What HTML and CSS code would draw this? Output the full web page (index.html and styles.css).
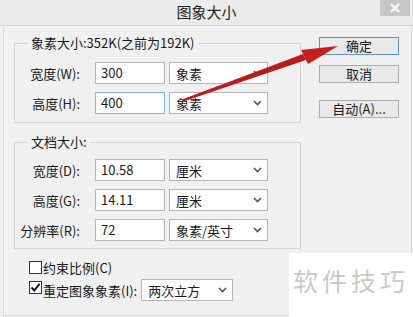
FILE: index.html
```html
<!DOCTYPE html>
<html>
<head>
    <title>图象大小</title>
    <link rel="stylesheet" href="styles.css">
</head>
<body>
<div class="window">
    <div class="titlebar">
        <span class="title">图象大小</span>
        <span class="close">
            <svg width="10" height="10" viewBox="0 0 10 10"><path d="M1 1L9 9M9 1L1 9" stroke="#fff" stroke-width="2"/></svg>
        </span>
    </div>

    <div class="frame">
        <div class="left">
            <fieldset class="group group-pixel">
                <legend>象素大小:352K(之前为192K)</legend>
                <div class="row">
                    <label>宽度(W):</label>
                    <div class="field">300</div>
                    <div class="select">象素<svg class="chev" width="9" height="6" viewBox="0 0 9 6"><path d="M1 1L4.5 4.5L8 1" fill="none" stroke="#555" stroke-width="1.6"/></svg></div>
                </div>
                <div class="row">
                    <label>高度(H):</label>
                    <div class="field focused">400</div>
                    <div class="select">象素<svg class="chev" width="9" height="6" viewBox="0 0 9 6"><path d="M1 1L4.5 4.5L8 1" fill="none" stroke="#555" stroke-width="1.6"/></svg></div>
                </div>
            </fieldset>

            <fieldset class="group group-doc">
                <legend>文档大小:</legend>
                <div class="row">
                    <label>宽度(D):</label>
                    <div class="field">10.58</div>
                    <div class="select">厘米<svg class="chev" width="9" height="6" viewBox="0 0 9 6"><path d="M1 1L4.5 4.5L8 1" fill="none" stroke="#555" stroke-width="1.6"/></svg></div>
                </div>
                <div class="row">
                    <label>高度(G):</label>
                    <div class="field">14.11</div>
                    <div class="select">厘米<svg class="chev" width="9" height="6" viewBox="0 0 9 6"><path d="M1 1L4.5 4.5L8 1" fill="none" stroke="#555" stroke-width="1.6"/></svg></div>
                </div>
                <div class="row">
                    <label>分辨率(R):</label>
                    <div class="field">72</div>
                    <div class="select">象素/英寸<svg class="chev" width="9" height="6" viewBox="0 0 9 6"><path d="M1 1L4.5 4.5L8 1" fill="none" stroke="#555" stroke-width="1.6"/></svg></div>
                </div>
            </fieldset>

            <div class="options">
                <div class="check-row">
                    <span class="box"></span>约束比例(C)
                </div>
                <div class="check-row second">
                    <span class="box">
                        <svg width="11" height="11" viewBox="0 0 11 11"><path d="M1.5 5.5L4.3 8.5L9.5 1.8" fill="none" stroke="#111" stroke-width="2"/></svg>
                    </span>重定图象象素(I):
                    <div class="select narrow">两次立方<svg class="chev" width="9" height="6" viewBox="0 0 9 6"><path d="M1 1L4.5 4.5L8 1" fill="none" stroke="#555" stroke-width="1.6"/></svg></div>
                </div>
            </div>
        </div>

        <div class="buttons">
            <button class="btn default">确定</button>
            <button class="btn">取消</button>
            <button class="btn auto">自动(A)...</button>
        </div>
    </div>

    <div class="watermark">软件技巧</div>

    <!-- red annotation arrow drawn over the dialog -->
    <svg class="arrow" width="413" height="317" viewBox="0 0 413 317">
        <polygon points="182,99.5 183.5,101.5 306,60 303,54" fill="#b81c1c"/>
        <polygon points="338,46 301,50 308,64" fill="#c81e1e"/>
    </svg>
</div>
</body>
</html>
```

FILE: styles.css
```css
* {
    box-sizing: border-box;
}

html, body {
    margin: 0;
    padding: 0;
    background: #f0f0f0;
    font-family: "Noto Sans CJK SC", "Liberation Sans", sans-serif;
    font-size: 13px;
    color: #1a1a1a;
}

.window {
    position: relative;
    width: 413px;
    height: 317px;
    overflow: hidden;
    background: #f0f0f0;
}

.titlebar {
    height: 26px;
    display: flex;
    justify-content: center;
    align-items: center;
    background: #ebebeb;
    border-bottom: 1px solid #d9d9d9;
}

.title {
    font-size: 15px;
    line-height: 20px;
    margin-top: -2px;
    color: #222;
}

.close {
    position: absolute;
    top: 0;
    left: 380px;
    width: 30px;
    height: 16px;
    background: #c6c6c6;
    display: flex;
    justify-content: center;
    align-items: center;
}

.frame {
    display: flex;
    height: 290px;
    margin: 0 1px 0 3px;
    border: 1px solid #dadada;
    border-top: none;
    background: #f0f0f0;
}

.left {
    width: 297px;
    padding-left: 10px;
}

.group {
    width: 287px;
    min-width: 0;
    margin: 0;
    border: 1px solid #d3d3d3;
    padding: 0;
}

.group legend {
    margin-left: 13px;
    padding: 0 3px;
    line-height: 18px;
}

.group-pixel {
    margin-top: 8px;
    padding-top: 10px;
    padding-bottom: 8px;
}

.group-doc {
    margin-top: 10px;
    padding-top: 8px;
    padding-bottom: 7px;
}

.row {
    display: flex;
    align-items: center;
    height: 22px;
    margin-bottom: 8px;
}

.row:last-child {
    margin-bottom: 0;
}

.row label {
    width: 65px;
    margin-right: 15px;
    text-align: right;
}

.field {
    width: 70px;
    height: 22px;
    line-height: 20px;
    padding-left: 5px;
    border: 1px solid #b5b5b5;
    background: #fff;
}

.field.focused {
    border-color: #7eb4ea;
}

.select {
    display: flex;
    align-items: center;
    justify-content: space-between;
    width: 99px;
    height: 22px;
    margin-left: 4px;
    padding: 0 5px 0 6px;
    border: 1px solid #b5b5b5;
    background: #fff;
}

.select.narrow {
    width: 92px;
    margin-left: 4px;
}

.options {
    margin-top: 8px;
    padding-left: 15px;
}

.check-row {
    display: flex;
    align-items: center;
    height: 20px;
}

.check-row.second {
    height: 22px;
    margin-top: 2px;
}

.check-row.second .box {
    margin-bottom: 5px;
}

.box {
    display: flex;
    justify-content: center;
    align-items: center;
    width: 13px;
    height: 13px;
    margin-right: 1px;
    border: 1px solid #333;
    background: #fff;
}

.buttons {
    display: flex;
    flex-direction: column;
    margin-left: 18px;
    padding-top: 11px;
}

.btn {
    width: 80px;
    height: 18px;
    margin-bottom: 10px;
    padding: 0;
    border: 1px solid #adadad;
    background: #e9e9e9;
    font-family: inherit;
    font-size: 13px;
    line-height: 16px;
    color: #1a1a1a;
}

.btn.default {
    border-color: #5b93c4;
}

.btn.auto {
    margin-top: 7px;
}

.watermark {
    position: absolute;
    left: 289px;
    top: 253px;
    right: 0;
    bottom: 0;
    padding: 12px 0 0 4px;
    background: #fff;
    font-size: 25px;
    line-height: 30px;
    letter-spacing: 4px;
    color: #c9c9c9;
    white-space: nowrap;
}

.arrow {
    position: absolute;
    top: 0;
    left: 0;
    pointer-events: none;
}
```
